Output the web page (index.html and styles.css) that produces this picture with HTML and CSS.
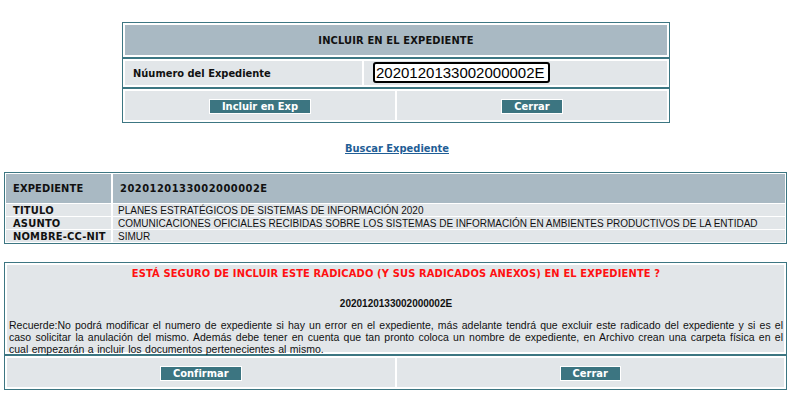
FILE: index.html
```html
<!DOCTYPE html>
<html lang="es">
<head>
    <meta charset="UTF-8">
    <title>Incluir en el Expediente</title>
    <link rel="stylesheet" href="styles.css">
</head>
<body>
    <div class="dialog">
        <div class="band">
            <div class="cell head">INCLUIR EN EL EXPEDIENTE</div>
        </div>
        <div class="band">
            <div class="cell label-cell">Núumero del Expediente</div>
            <div class="cell input-cell">
                <input type="text" id="numExpediente" class="exp-input" value="2020120133002000002E">
            </div>
        </div>
        <div class="band">
            <div class="cell btn-cell"><button class="btn">Incluir en Exp</button></div>
            <div class="cell btn-cell"><button class="btn">Cerrar</button></div>
        </div>
    </div>

    <div class="search">
        <a href="#" class="search-link">Buscar Expediente</a>
    </div>

    <div class="info">
        <div class="info-head strong">EXPEDIENTE</div>
        <div class="info-head strong wide">2020120133002000002E</div>
        <div class="info-key strong">TITULO</div>
        <div class="info-val">PLANES ESTRATÉGICOS DE SISTEMAS DE INFORMACIÓN 2020</div>
        <div class="info-key strong">ASUNTO</div>
        <div class="info-val">COMUNICACIONES OFICIALES RECIBIDAS SOBRE LOS SISTEMAS DE INFORMACIÓN EN AMBIENTES PRODUCTIVOS DE LA ENTIDAD</div>
        <div class="info-key strong">NOMBRE-CC-NIT</div>
        <div class="info-val">SIMUR</div>
    </div>

    <div class="confirm">
        <div class="band">
            <div class="cell msg-cell">
                <div class="warning">ESTÁ SEGURO DE INCLUIR ESTE RADICADO (Y SUS RADICADOS ANEXOS) EN EL EXPEDIENTE ?</div>
                <div class="exp-number">2020120133002000002E</div>
                <p class="note">Recuerde:No podrá modificar el numero de expediente si hay un error en el expediente, más adelante tendrá que excluir este radicado del expediente y si es el caso solicitar la anulación del mismo. Además debe tener en cuenta que tan pronto coloca un nombre de expediente, en Archivo crean una carpeta física en el cual empezarán a incluir los documentos pertenecientes al mismo.</p>
            </div>
        </div>
        <div class="band">
            <div class="cell btn-cell"><button class="btn">Confirmar</button></div>
            <div class="cell btn-cell"><button class="btn">Cerrar</button></div>
        </div>
    </div>
</body>
</html>
```

FILE: styles.css
```css
body {
    margin: 0;
    background: #fff;
    font-family: "Liberation Sans", Arial, sans-serif;
    font-size: 10px;
    color: #000;
}
* {
    box-sizing: border-box;
}
.strong,
.head,
.label-cell,
.btn,
.search-link,
.warning {
    font-family: "DejaVu Sans Condensed", "DejaVu Sans", sans-serif;
    font-stretch: condensed;
    font-weight: bold;
    font-size: 11px;
    letter-spacing: 0.15px;
}

/* bloques con borde verde */
.band {
    display: flex;
    gap: 2px;
    border: 1px solid #3c7682;
    padding: 2px;
    background: #fff;
}
.cell {
    flex: 1;
    background: #e2e6e9;
}

.dialog {
    width: 548px;
    margin: 22px 0 0 122px;
}
.head {
    height: 30px;
    line-height: 31px;
    text-align: center;
    background: #a9b9c3;
    color: #111;
}
.label-cell {
    flex: 0 0 237px;
    height: 24px;
    line-height: 25px;
    padding-left: 8px;
    color: #111;
    letter-spacing: 0;
}
.input-cell {
    display: flex;
    align-items: center;
    padding-left: 9px;
}
.exp-input {
    width: 177px;
    height: 21px;
    margin-top: -2px;
    border: 2px solid #000;
    border-radius: 3px;
    padding: 0 1px;
    font-family: "Liberation Sans", Arial, sans-serif;
    font-size: 15px;
    color: #000;
    background: #fff;
    outline: none;
}
.btn-cell {
    height: 29px;
    display: flex;
    align-items: center;
    justify-content: center;
}
.btn {
    height: 15px;
    line-height: 13px;
    padding: 0 12px;
    margin-top: 2px;
    border: 1px solid #fff;
    background: #3c7581;
    color: #fff;
    letter-spacing: 0;
}

.search {
    height: 49px;
    padding-top: 19px;
    text-align: center;
}
.search-link {
    color: #1f5e96;
    text-decoration: underline;
    letter-spacing: 0;
}

/* tabla de datos del expediente */
.info {
    width: 783px;
    margin-left: 4px;
    display: grid;
    grid-template-columns: 105px 1fr;
    grid-template-rows: 29px;
    grid-auto-rows: 12px;
    gap: 1px 2px;
    border: 1px solid #3c7682;
    padding: 1px;
    background: #fff;
}
.info-head {
    line-height: 29px;
    padding-left: 7px;
    background: #a9b9c3;
    color: #111;
}
.info-head.wide {
    letter-spacing: 0.5px;
}
.info-key {
    line-height: 13px;
    padding-left: 7px;
    background: #e2e6e9;
    color: #111;
    letter-spacing: 0.2px;
}
.info-val {
    line-height: 13px;
    padding-left: 5px;
    background: #e2e6e9;
    color: #111;
}

.confirm {
    width: 783px;
    margin: 18px 0 0 4px;
}
.msg-cell {
    height: 87px;
    padding: 2px 1px 0 2px;
}
.warning {
    line-height: 13px;
    text-align: center;
    color: #ff1010;
}
.exp-number {
    margin-top: 18px;
    line-height: 12px;
    text-align: center;
    font-weight: bold;
    color: #111;
}
.note {
    margin: 9px 0 0;
    line-height: 12px;
    font-size: 10.5px;
    word-spacing: 0.6px;
    text-align: justify;
    color: #111;
}
```
